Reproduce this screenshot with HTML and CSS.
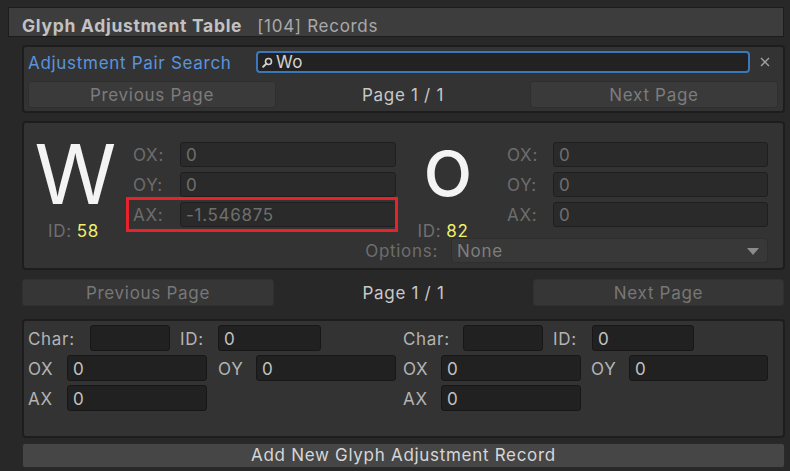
FILE: index.html
```html
<!DOCTYPE html>
<html>
<head>
<meta charset="utf-8">
<link rel="stylesheet" href="styles.css">
</head>
<body>
<div class="page">
  <div class="header"><span class="title">Glyph Adjustment Table</span><span class="count">[104] Records</span></div>
  <div class="content">
    <div class="panel search-panel">
      <div class="search-row">
        <span class="link-label">Adjustment Pair Search</span>
        <div class="search-field">
          <svg class="search-icon" width="11" height="11" viewBox="0 0 11 11"><circle cx="6.5" cy="4.5" r="3" fill="none" stroke="#d0d0d0" stroke-width="1.6"/><line x1="4.4" y1="6.6" x2="1.2" y2="9.8" stroke="#d0d0d0" stroke-width="2" stroke-linecap="round"/></svg>
          <span class="search-text">Wo</span>
        </div>
        <span class="clear"><svg width="10" height="10" viewBox="0 0 10 10"><path d="M1 1 L9 9 M9 1 L1 9" stroke="#a2a2a2" stroke-width="1.3"/></svg></span>
      </div>
      <div class="pager inner-pager">
        <div class="btn">Previous Page</div>
        <div class="page-label">Page 1 / 1</div>
        <div class="btn">Next Page</div>
      </div>
    </div>

    <div class="panel pair-panel">
      <div class="pair-grid">
        <div class="glyph-cell first">
          <div class="glyph glyph-w">W</div>
          <div class="glyph-id"><span class="id-label">ID:</span><span class="id-value">58</span></div>
        </div>
        <div class="p-label r1 c2">OX:</div>
        <div class="p-field r1 c3">0</div>
        <div class="p-label r2 c2">OY:</div>
        <div class="p-field r2 c3">0</div>
        <div class="p-label r3 c2">AX:</div>
        <div class="p-field r3 c3">-1.546875</div>

        <div class="glyph-cell second">
          <div class="glyph glyph-o">o</div>
          <div class="glyph-id id-o"><span class="id-label">ID:</span><span class="id-value">82</span></div>
        </div>
        <div class="p-label r1 c5">OX:</div>
        <div class="p-field r1 c6">0</div>
        <div class="p-label r2 c5">OY:</div>
        <div class="p-field r2 c6">0</div>
        <div class="p-label r3 c5">AX:</div>
        <div class="p-field r3 c6">0</div>

        <div class="options-row">
          <span class="options-label">Options:</span>
          <div class="dropdown"><span>None</span><svg width="12" height="7" viewBox="0 0 12 7"><path d="M0 0 H12 L6 7 Z" fill="#8c8c8c"/></svg></div>
        </div>
      </div>
      <div class="highlight"></div>
    </div>

    <div class="pager outer-pager">
      <div class="btn">Previous Page</div>
      <div class="page-label">Page 1 / 1</div>
      <div class="btn">Next Page</div>
    </div>

    <div class="panel new-panel">
      <div class="new-grid">
        <div class="half">
          <div class="n-row">
            <span class="n-label w62">Char:</span><div class="n-field w80"></div>
            <span class="n-label w38 ml10">ID:</span><div class="n-field w103">0</div>
          </div>
          <div class="n-row">
            <span class="n-label w39">OX</span><div class="n-field w140">0</div>
            <span class="n-label w38 ml11">OY</span><div class="n-field w140">0</div>
          </div>
          <div class="n-row">
            <span class="n-label w39">AX</span><div class="n-field w140">0</div>
          </div>
        </div>
        <div class="half">
          <div class="n-row">
            <span class="n-label w60">Char:</span><div class="n-field w80"></div>
            <span class="n-label w39 ml10">ID:</span><div class="n-field w102">0</div>
          </div>
          <div class="n-row">
            <span class="n-label w38">OX</span><div class="n-field w140">0</div>
            <span class="n-label w38 ml10">OY</span><div class="n-field w139">0</div>
          </div>
          <div class="n-row">
            <span class="n-label w38">AX</span><div class="n-field w140">0</div>
          </div>
        </div>
      </div>
    </div>

    <div class="add-btn">Add New Glyph Adjustment Record</div>
  </div>
</div>
</body>
</html>
```

FILE: styles.css
```css
* { box-sizing: border-box; }
html, body {
  margin: 0;
  padding: 0;
  background: #282828;
  font-family: Inter, "Noto Sans", "DejaVu Sans", sans-serif;
  font-size: 17px;
  letter-spacing: 0.7px;
  color: #c4c4c4;
}
.page {
  width: 790px;
  height: 471px;
  padding-top: 7px;
  overflow: hidden;
}
.header {
  margin-left: 8px;
  width: 776px;
  height: 30px;
  background: #3d3d3d;
  border: 1px solid #1c1c1c;
  padding: 6px 0 0 13px;
  line-height: 23px;
  white-space: nowrap;
}
.title {
  font-weight: 700;
  color: #c2c2c2;
  font-size: 17.5px;
}
.count {
  margin-left: 15px;
  color: #a9a9a9;
  font-size: 17px;
}
.content {
  margin-left: 22px;
  width: 763px;
}
.panel {
  background: #333333;
  border: 2px solid #1d1d1d;
  border-radius: 4px;
}
.search-panel {
  margin-top: 8px;
  height: 68px;
  padding: 3px 5px 0 4px;
}
.search-row {
  display: grid;
  grid-template-columns: 228px 494px 1fr;
  height: 22px;
  align-items: center;
}
.link-label {
  color: #5b93dc;
  line-height: 22px;
  padding-top: 2px;
  white-space: nowrap;
}
.search-field {
  height: 22px;
  border: 2px solid #3a78bb;
  border-radius: 4px;
  background: #222222;
  display: flex;
  align-items: center;
  padding-left: 4px;
  gap: 3px;
}
.search-text {
  color: #d2d2d2;
  line-height: 18px;
  letter-spacing: 0.3px;
}
.clear {
  display: flex;
  justify-content: center;
  padding-left: 2px;
}
.pager {
  display: grid;
  height: 26px;
  align-items: stretch;
}
.inner-pager {
  margin-top: 9px;
  grid-template-columns: 248px 1fr 248px;
}
.btn {
  background: #3a3a3a;
  border-radius: 3px;
  border: 1px solid #2f2f2f;
  color: #7c7c7c;
  text-align: center;
  line-height: 24px;
  padding-top: 1px;
  white-space: nowrap;
}
.page-label {
  text-align: center;
  line-height: 26px;
  padding-top: 1px;
  color: #c8c8c8;
  white-space: nowrap;
}
.outer-pager {
  margin-top: 9px;
  grid-template-columns: 252px 1fr 251px;
  padding-right: 1px;
}
.outer-pager .btn {
  background: #363636;
  border-color: #303030;
  color: #777777;
}
.pair-panel {
  margin-top: 8px;
  position: relative;
}
.pair-grid {
  display: grid;
  grid-template-columns: 103px 53px 216px 104px 53px 215px;
  grid-template-rows: 25px 25px 25px 31px;
  row-gap: 5px;
  padding: 19px 15px 5px 0;
}
.glyph-cell {
  grid-row: 1 / 5;
  display: flex;
  flex-direction: column;
  align-items: center;
}
.glyph-cell.first { grid-column: 1; }
.glyph-cell.second { grid-column: 4; }
.glyph {
  color: #f4f4f4;
  font-size: 83px;
  letter-spacing: 0;
}
.glyph-w { line-height: 64px; }
.glyph-o { line-height: 48px; }
.glyph-id {
  margin-top: 15px;
  line-height: 20px;
  white-space: nowrap;
  display: flex;
  gap: 5px;
  padding-right: 4px;
}
.id-o { margin-top: 31px; padding-right: 10px; }
.id-label { color: #6f6f6f; }
.id-value { color: #f1ef6a; }
.r1 { grid-row: 1; }
.r2 { grid-row: 2; }
.r3 { grid-row: 3; }
.c2 { grid-column: 2; padding-left: 6px; }
.c3 { grid-column: 3; }
.c5 { grid-column: 5; padding-left: 7px; }
.c6 { grid-column: 6; }
.p-label {
  color: #6d6d6d;
  line-height: 25px;
  padding-top: 1px;
}
.p-field {
  background: #2a2a2a;
  border: 1px solid #1f1f1f;
  border-radius: 3px;
  color: #6f6f6f;
  padding-left: 5px;
  line-height: 23px;
  padding-top: 1px;
}
.options-row {
  grid-row: 4;
  grid-column: 3 / 7;
  align-self: end;
  height: 25px;
  display: flex;
  justify-content: flex-end;
  align-items: center;
  gap: 13px;
}
.options-label { color: #6d6d6d; padding-top: 1px; }
.dropdown {
  width: 317px;
  height: 25px;
  background: #383838;
  border: 1px solid #2e2e2e;
  border-radius: 3px;
  color: #7e7e7e;
  display: flex;
  align-items: center;
  justify-content: space-between;
  padding: 1px 8px 0 5px;
}
.highlight {
  position: absolute;
  left: 102px;
  top: 74px;
  width: 272px;
  height: 35px;
  border: 3px solid #e8222a;
}
.new-panel {
  margin-top: 14px;
  padding: 4px 0 25px 4px;
}
.new-grid {
  display: grid;
  grid-template-columns: 375px 375px;
}
.half {
  display: flex;
  flex-direction: column;
  gap: 4px;
}
.n-row {
  display: flex;
  height: 26px;
  align-items: stretch;
}
.n-label {
  color: #b3b3b3;
  line-height: 26px;
  padding-top: 1px;
  flex: none;
}
.n-field {
  flex: none;
  background: #212121;
  border: 1px solid #171717;
  border-radius: 3px;
  color: #c2c2c2;
  padding-left: 5px;
  line-height: 24px;
  padding-top: 1px;
}
.w38 { width: 38px; }
.w39 { width: 39px; }
.w60 { width: 60px; }
.w62 { width: 62px; }
.w80 { width: 80px; }
.w102 { width: 102px; }
.w103 { width: 103px; }
.w139 { width: 139px; }
.w140 { width: 140px; }
.ml10 { margin-left: 10px; }
.ml11 { margin-left: 11px; }
.add-btn {
  margin-top: 5px;
  height: 25px;
  background: #464646;
  border: 1px solid #2a2a2a;
  border-radius: 3px;
  color: #d6d6d6;
  text-align: center;
  line-height: 23px;
  white-space: nowrap;
}
```
